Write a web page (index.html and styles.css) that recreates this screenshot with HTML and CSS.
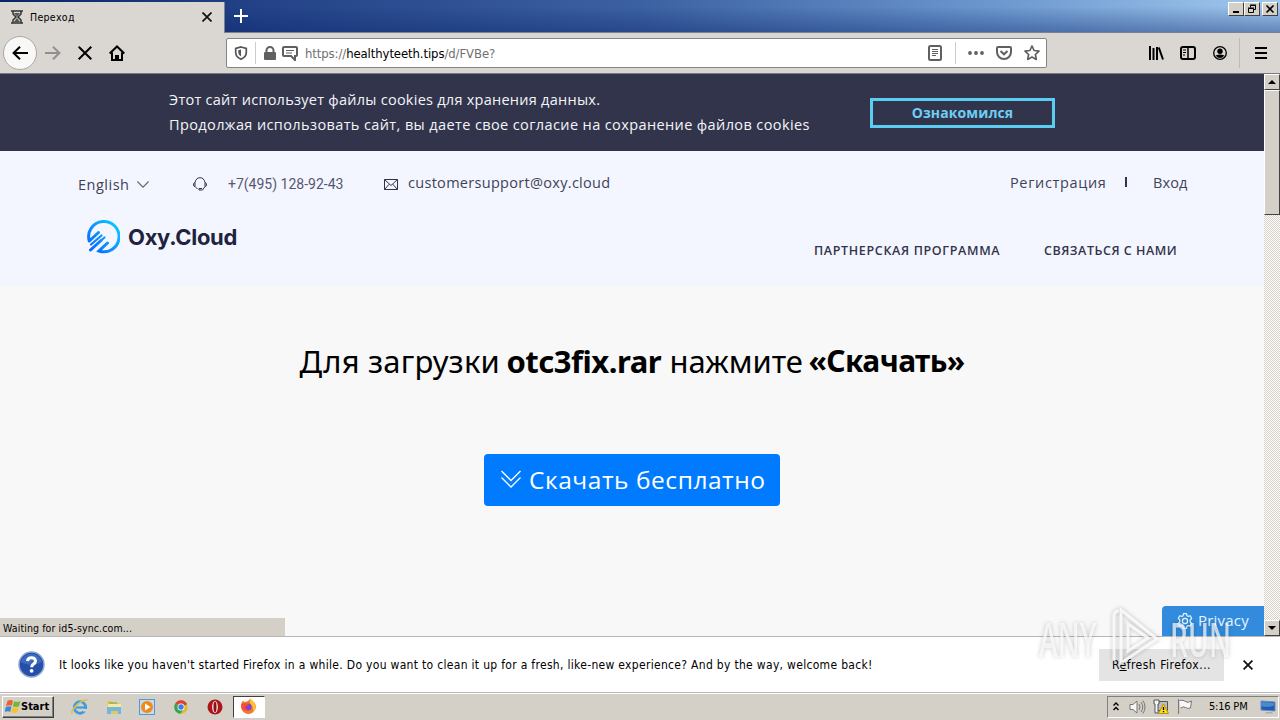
FILE: index.html
```html
<!DOCTYPE html>
<html lang="ru">

<head>
    <meta charset="UTF-8">
    <meta name="viewport" content="width=device-width, initial-scale=1.0">
    <title>Переход</title>
    <link rel="stylesheet" href="styles.css">
</head>

<body>

    <!-- Tab strip -->
    <div class="titlebar">
        <div class="tab">
            <svg class="tab-icon" width="12" height="14" viewBox="0 0 12 14" fill="none" stroke="#333" stroke-width="1.500"><path d="M0 1h12M0 13h12M2 1v3l3 3-3 3v3M10 1v3L7 7l3 3v3"/><path d="M3 3h6L6 6.500zM2.500 12.500L6 8l3.500 4.500z" fill="#555" stroke="none"/></svg>
            <span class="tab-title">Переход</span>
            <svg class="tab-close" width="10" height="10" viewBox="0 0 10 10" stroke="#111" stroke-width="1.700"><path d="M.500.500l9 9M9.500.500l-9 9"/></svg>
        </div>
        <svg class="new-tab" width="14" height="14" viewBox="0 0 14 14" stroke="#fff" stroke-width="2"><path d="M7 0v14M0 7h14"/></svg>
        <div class="window-buttons">
            <button><svg width="12" height="10" viewBox="0 0 12 10"><path d="M3 7h6v2H3z"/></svg></button>
            <button><svg width="12" height="10" viewBox="0 0 12 10" fill="none" stroke="#000"><path d="M4.500 3.500V1.500h5v4h-2M2.500 4.500h5v4h-5zM4 1h6M2 4h6"/></svg></button>
            <button class="close"><svg width="12" height="10" viewBox="0 0 12 10" stroke="#000" stroke-width="1.600"><path d="M2.500 1.500l7 7M9.500 1.500l-7 7"/></svg></button>
        </div>
    </div>

    <!-- Navigation bar -->
    <div class="navbar">
        <div class="back"><svg width="16" height="14" viewBox="0 0 16 14" fill="none" stroke="#000" stroke-width="2"><path d="M16 7H1.500M8 .8L1.600 7 8 13.200"/></svg></div>
        <svg class="forward" width="16" height="14" viewBox="0 0 16 14" fill="none" stroke="#909090" stroke-width="2"><path d="M0 7h14.500M8 .8L14.400 7 8 13.200"/></svg>
        <svg class="stop" width="14" height="14" viewBox="0 0 14 14" stroke="#000" stroke-width="2"><path d="M.7.7l12.600 12.600M13.300.7L.7 13.300"/></svg>
        <svg class="home" width="16" height="16" viewBox="0 0 16 16" fill="none" stroke="#000" stroke-width="2"><path d="M.7 8.500L8 1.500l7.300 7M3 7.500V15h10V7.500"/><path d="M6 15v-5h4v5z" fill="#000" stroke="none"/></svg>
        <div class="urlbar">
            <svg class="shield" width="14" height="14" viewBox="0 0 14 14" fill="none" stroke="#555" stroke-width="1.700"><path d="M7 1l5.300 1.500v3.700c0 3.400-2 5.600-5.300 7-3.300-1.400-5.300-3.600-5.300-7V2.500z"/><path d="M7 3.500v7C5 9.300 4.300 8 4.300 6V4.300z" fill="#555" stroke="none"/></svg>
            <i class="url-sep"></i>
            <svg class="lock" width="12" height="14" viewBox="0 0 12 14"><path d="M2.500 7V4.500a3.500 3.500 0 0 1 7 0V7" fill="none" stroke="#606060" stroke-width="2"/><rect y="6" width="12" height="8" rx="1" fill="#606060"/></svg>
            <svg class="chat" width="16" height="15" viewBox="0 0 16 15" fill="none" stroke="#606060"><path d="M2 1h12q1 0 1 1v7q0 1-1 1h-1v4l-4-4H2q-1 0-1-1V2q0-1 1-1z" stroke-width="2"/><path d="M4 4.500h8M4 7h6" stroke-width="1.200"/></svg>
            <span class="url">https://<b>healthyteeth.tips</b>/d/FVBe?</span>
            <svg class="reader" width="14" height="16" viewBox="0 0 14 16" fill="none" stroke="#606060"><rect x="1" y="1" width="12" height="14" rx="1.500" stroke-width="2"/><path d="M4 4.500h6M4 6.500h6M4 8.500h6M4 10.500h4"/></svg>
            <i class="url-sep"></i>
            <svg class="dots" width="16" height="4" viewBox="0 0 16 4" fill="#606060"><circle cx="2" cy="2" r="1.900"/><circle cx="8" cy="2" r="1.900"/><circle cx="14" cy="2" r="1.900"/></svg>
            <svg class="pocket" width="16" height="14" viewBox="0 0 16 14" fill="none" stroke="#606060" stroke-width="2"><path d="M2 1h12q1 0 1 1v4a7 7 0 0 1-14 0V2q0-1 1-1z"/><path d="M4.500 5L8 8.300 11.500 5"/></svg>
            <svg class="star" width="16" height="16" viewBox="0 0 16 16" fill="none" stroke="#606060" stroke-width="1.700" stroke-linejoin="round"><path d="M8 1l2.100 4.500 4.900.6-3.600 3.400.9 4.900L8 12l-4.300 2.400.9-4.900L1 6.100l4.900-.6z"/></svg>
        </div>
        <div class="tools">
            <svg width="16" height="14" viewBox="0 0 16 14" fill="none" stroke="#000" stroke-width="2"><path d="M2 0v14M5.500 2v12M9 1v13M10.800 1.500l4.200 12"/></svg>
            <svg width="16" height="14" viewBox="0 0 16 14" fill="none" stroke="#000" stroke-width="2"><rect x="1" y="1" width="14" height="12" rx="2"/><path d="M8 1v12" stroke-width="1.500"/><path d="M3 4h3M3 6.500h3M3 9h2" stroke-width="1"/></svg>
            <svg width="14" height="14" viewBox="0 0 14 14"><circle cx="7" cy="7" r="6.300" fill="none" stroke="#000" stroke-width="1.300"/><circle cx="7" cy="5.300" r="2.700"/><path d="M2.600 9.500Q7 7.500 11.400 9.500 9.500 12 7 12T2.600 9.500z"/></svg>
        </div>
        <div class="menu"><svg width="12" height="12" viewBox="0 0 12 12" stroke="#000" stroke-width="2"><path d="M0 1h12M0 6h12M0 11h12"/></svg></div>
    </div>

    <!-- Web page -->
    <div class="viewport">
        <div class="page">
            <div class="cookies">
                <p><span class="cookie-first">Этот сайт использует файлы cookies для хранения данных.</span><br><span class="cookie-second">Продолжая использовать сайт, вы даете свое согласие на сохранение файлов cookies</span></p>
                <button><span>Ознакомился</span></button>
            </div>
            <header class="site-header">
                <div class="topline">
                    <span class="lang">English</span>
                    <svg class="chevron" width="12" height="7" viewBox="0 0 12 7" fill="none" stroke="#66687a" stroke-width="1.200"><path d="M.4.500L6 6.200 11.600.500"/></svg>
                    <svg class="headset" width="14" height="14" viewBox="0 0 14 14" fill="none" stroke="#30324c"><path d="M4.500 12L2 9.500V5.500Q3 .700 7 .700t5 4.800v4L9.500 13H6v-1.500h3M2 5.500L.600 6.500v2.300L2 9.500M12 5.500l1.400 1v2.300L12 9.500"/></svg>
                    <span class="phone">+7(495) 128-92-43</span>
                    <svg class="mail" width="14" height="11" viewBox="0 0 14 11" fill="none" stroke="#30324c"><path d="M.500.500h13v10H.500zM.500.500L7 6.500l6.500-6M.500 10.500l4.700-5.300M13.500 10.500L8.800 5.200"/></svg>
                    <span class="email">customersupport@oxy.cloud</span>
                    <span class="register">Регистрация</span>
                    <i class="divider"></i>
                    <span class="login">Вход</span>
                </div>
                <div class="mainline">
                    <div class="logo">
                        <svg width="34" height="35" viewBox="0 0 34 35" fill="none" stroke="url(#oxy)" stroke-width="3" stroke-linecap="round">
                            <defs><linearGradient id="oxy" gradientUnits="userSpaceOnUse" x1="3" y1="30" x2="31" y2="4"><stop offset="0" stop-color="#0a65ff"/><stop offset="1" stop-color="#0cc9ff"/></linearGradient></defs>
                            <path d="M3.300 22A15.200 15.200 0 1 1 13 32L21.500 24M3.300 22L12.500 13.500M4.500 31L15 21.500"/>
                            <path d="M5 25.500L15.500 16.500M15.500 21L18.500 18.500" stroke-width="2.200"/>
                        </svg>
                        <span>Oxy.Cloud</span>
                    </div>
                    <nav>
                        <a class="partner">ПАРТНЕРСКАЯ ПРОГРАММА</a>
                        <a class="contact">СВЯЗАТЬСЯ С НАМИ</a>
                    </nav>
                </div>
            </header>
            <main>
                <h1><span class="h-a">Для загрузки</span> <b class="h-b">otc3fix.rar</b> <span class="h-c">нажмите</span> <b class="h-d">«Скачать»</b></h1>
                <button class="download">
                    <svg width="20" height="18" viewBox="0 0 20 18" fill="none" stroke="#fff" stroke-width="1.300"><path d="M.500 1L10 10.500 19.500 1M.500 7.500L10 17l9.500-9.500"/></svg>
                    <span>Скачать бесплатно</span>
                </button>
            </main>
            <div class="privacy">
                <svg width="16" height="16" viewBox="0 0 16 16" fill="none" stroke="#e8f4ff" stroke-width="1.200" stroke-linejoin="round"><path d="M6.500.700h3l.4 2 1.300.700 2-.700 1.500 2.600L13.200 7v2l1.500 1.500-1.500 2.600-2-.6-1.300.8-.4 2h-3l-.4-2-1.300-.8-2 .6-1.500-2.600L2.800 9V7L1.300 5.300l1.500-2.600 2 .7L6.100 2.700z"/><circle cx="8" cy="8" r="2.600"/></svg>
                <span>Privacy</span>
            </div>
            <div class="status">Waiting for id5-sync.com...</div>
        </div>
        <div class="scrollbar">
            <div class="arrow"><svg width="8" height="4" viewBox="0 0 8 4"><path d="M4 0l4 4H0z"/></svg></div>
            <div class="thumb"></div>
            <div class="arrow down"><svg width="8" height="4" viewBox="0 0 8 4"><path d="M0 0h8L4 4z"/></svg></div>
        </div>
    </div>

    <!-- Firefox notification -->
    <div class="notice">
        <svg class="question" width="27" height="27" viewBox="0 0 27 27"><circle cx="13.500" cy="13.500" r="12.500" fill="#2450a8" stroke="#8fa5d6" stroke-width="1.500"/><path d="M3 11a10.800 10.800 0 0 1 21 0Q13 17 3 11z" fill="#3d69be"/><path d="M9.500 10.200Q9.700 6.700 13.500 6.700t4 3.300q0 2-2.200 3.200-1.600 1-1.600 3" fill="none" stroke="#fff" stroke-width="3"/><circle cx="13.600" cy="19.800" r="1.900" fill="#fff"/></svg>
        <span class="notice-text">It looks like you haven't started Firefox in a while. Do you want to clean it up for a fresh, like-new experience? And by the way, welcome back!</span>
        <button><span>R<u>e</u>fresh Firefox...</span></button>
        <svg class="notice-close" width="10" height="10" viewBox="0 0 10 10" stroke="#111" stroke-width="1.800"><path d="M.600.600l8.800 8.800M9.400.600L.600 9.400"/></svg>
    </div>

    <!-- Taskbar -->
    <div class="taskbar">
        <div class="start">
            <svg width="16" height="15" viewBox="0 0 16 15"><path d="M2.500 2Q5 .300 8 1.700L6.800 6.700Q4 5.500 1 7z" fill="#e9622b"/><path d="M9 2.200q3 1.300 6.500 0l-1.400 5Q11 8.700 7.800 7.200z" fill="#7ab43c"/><path d="M.800 8Q4 6.500 6.500 7.800L5.200 12.700Q2.500 11.500-.400 13z" fill="#3f86d2"/><path d="M7.500 8.300q3 1.400 6.300 0l-1.400 5q-3 1.300-6.200 0z" fill="#f5c330"/></svg>
            <span>Start</span>
        </div>
        <div class="launchers">
            <svg width="18" height="18" viewBox="0 0 18 18" fill="none"><circle cx="9" cy="9.500" r="5.800" stroke="#3b9fdd" stroke-width="2.800"/><path d="M5 9.500h9" stroke="#3b9fdd" stroke-width="2.200"/><path d="M11 11h6v2.500h-5z" fill="#d6d3cc"/><path d="M1 16C-.500 12 10 1 16.500 2" stroke="#e5bd45" stroke-width="1.500"/></svg>
            <svg width="18" height="18" viewBox="0 0 18 18"><path d="M2 3h5l1 2h7v11H2z" fill="#e8c75e"/><path d="M3 6h13v5H3z" fill="#f8e8a4"/><path d="M2 9h14v7h-3v-3H6v3H2z" fill="#71b8dd"/><path d="M4 5h8" stroke="#62ac4b"/></svg>
            <svg width="18" height="18" viewBox="0 0 18 18"><rect x="1.500" y="1.500" width="15" height="15" fill="#c5dcec" stroke="#519ad1"/><circle cx="9" cy="9" r="6" fill="#f08a1c"/><path d="M7 5.500l5.500 3.500L7 12.500z" fill="#fff"/></svg>
            <svg width="18" height="18" viewBox="0 0 18 18"><circle cx="9" cy="9" r="6.700" fill="#e1ba32"/><path d="M9 9L3.200 5.600A6.700 6.700 0 0 1 15.200 6.300z" fill="#d94435"/><path d="M9 9L3.200 5.600A6.700 6.700 0 0 0 8.500 15.700l3-5z" fill="#37a353"/><circle cx="9" cy="9" r="3.500" fill="#fff"/><circle cx="9" cy="9" r="2.700" fill="#397fe0"/></svg>
            <svg width="18" height="18" viewBox="0 0 18 18"><circle cx="9" cy="9" r="7.500" fill="#ad1519"/><ellipse cx="9" cy="9" rx="2.900" ry="6" fill="#f1e4e0"/><ellipse cx="9" cy="9" rx="1.500" ry="5.300" fill="#8b1115"/></svg>
        </div>
        <div class="active-app">
            <svg width="17" height="17" viewBox="0 0 17 17"><path d="M1.500 5L3 2.500 4 4l3-.500Q10 2 10 .500 12 2 12.500 4L14 4q2.500 3 1.700 6a7.400 7.400 0 0 1-14.600-.500Q.800 7 1.500 5z" fill="#f7772b"/><path d="M10 .500q4 2 5.500 6.500Q16 11 13 14q1-5-3-9z" fill="#ffc52e"/><circle cx="8" cy="9" r="3.500" fill="#7846ce"/><path d="M1.500 6Q6 4 9 7.500L5.500 8q-.500 3 3 4.200Q4 14 1.500 10z" fill="#fb493c"/></svg>
        </div>
        <div class="tray">
            <svg class="t-up" width="6" height="9" viewBox="0 0 6 9" fill="none" stroke="#000" stroke-width="1.400"><path d="M.500 3.500L3 1l2.500 2.500M.500 8L3 5.500 5.500 8"/></svg>
            <svg class="t-sound" width="17" height="14" viewBox="0 0 17 14" fill="none" stroke="#777"><path d="M1 4.500h3L8 1v12L4 9.500H1z" fill="#f8f8f8"/><path d="M10 4q2 3 0 6M12 2q3.500 5 0 10M14 .500q4 6.500 0 13"/></svg>
            <svg class="t-net" width="16" height="15" viewBox="0 0 16 15"><path d="M4.500 2.500h10v9h-10z" fill="#bcbcc0" stroke="#555"/><path d="M1 1h5v4H5v9H2V5H1z" fill="#f6f6f6" stroke="#555"/><path d="M10.500 5l5 9.500h-10z" fill="#ffdc24" stroke="#bc9600"/><path d="M10.500 8v3M10.500 12v1.300" stroke="#000" stroke-width="1.300"/></svg>
            <svg class="t-flag" width="16" height="15" viewBox="0 0 16 15"><path d="M2.500 1.500q4-1 6 1t6-.500l-1 7q-3 1-5-.500t-5 .500M1.500 0v15" fill="#f7f7f7" stroke="#777"/></svg>
            <span class="clock">5:16 PM</span>
            <svg class="t-desktop" width="16" height="14" viewBox="0 0 16 14"><path d="M1 1l14 1v9L1 10z" fill="#225bb2" stroke="#668cc0"/><path d="M1 2l13 .600v3Q7 8 1 6z" fill="#498bd2"/><path d="M6 12h6l1 1.500H5z" fill="#aaa"/></svg>
        </div>
    </div>

    <!-- Watermark -->
    <div class="watermark">
        <span class="any">ANY</span>
        <svg width="58" height="62" viewBox="0 0 58 62" fill="none" stroke="#fff" stroke-opacity=".8" stroke-width="3"><path d="M11 8v46M11 8q1-4 5-4M18 3l36 29-36 24zM25 17v27l20-13z"/></svg>
        <span class="run">RUN</span>
    </div>

</body>

</html>
```
FILE: styles.css
```css
* {
    margin: 0;
    padding: 0;
    box-sizing: border-box;
}

body {
    width: 1280px;
    height: 720px;
    overflow: hidden;
    display: flex;
    flex-direction: column;
    position: relative;
    background: #d4d0c8;
    font-family: "DejaVu Sans Condensed", "DejaVu Sans", sans-serif;
    font-size: 11px;
    color: #000;
}

svg {
    display: block;
    flex: none;
}

span,
a {
    white-space: nowrap;
}

button {
    border: none;
    font: inherit;
}

/* Tab strip */
.titlebar {
    height: 33px;
    flex: none;
    display: flex;
    align-items: flex-start;
    border-bottom: 1px solid #7b8290;
    background: linear-gradient(to bottom, rgba(10, 36, 106, 0) 20%, rgba(10, 36, 106, 0.4)), linear-gradient(to right, #0a246a 0, #234287 20%, #3c61a2 50%, #6c98cf 78%, #a1c8ee 100%);
}

.tab {
    width: 225px;
    height: 32px;
    margin-top: 2px;
    padding: 0 12px 2px 11px;
    display: flex;
    align-items: center;
    background: #dad7d2;
    border-right: 1px solid #7b8290;
}

.tab-title {
    margin-left: 7px;
    font-size: 10.5px;
    letter-spacing: 0.3px;
}

.tab-close {
    margin-left: auto;
}

.new-tab {
    margin: 9px 0 0 9px;
}

.window-buttons {
    margin: 2px 2px 0 auto;
    display: flex;
}

.window-buttons button {
    width: 16px;
    height: 14px;
    padding: 1px;
    background: #d4d0c8;
    border: 1px solid;
    border-color: #fff #404040 #404040 #fff;
}

.window-buttons .close {
    margin-left: 2px;
}

/* Navigation bar */
.navbar {
    height: 41px;
    flex: none;
    display: flex;
    align-items: center;
    background: #dad7d2;
    border-bottom: 1px solid #777983;
}

.back {
    width: 34px;
    height: 34px;
    margin-left: 3px;
    display: flex;
    align-items: center;
    justify-content: center;
    background: #f8f8f7;
    border: 1px solid #aaa8a5;
    border-radius: 50%;
}

.forward {
    margin-left: 8px;
}

.stop {
    margin-left: 17px;
}

.home {
    margin-left: 17px;
}

.urlbar {
    width: 821px;
    height: 30px;
    margin-left: 101px;
    padding: 0 6px 0 7px;
    display: flex;
    align-items: center;
    background: #fff;
    border: 1px solid #858585;
    border-radius: 2px;
}

.url-sep {
    width: 1px;
    height: 22px;
    background: #ccc;
}

.shield {
    margin-right: 7px;
}

.lock {
    margin-left: 8px;
}

.chat {
    margin-left: 6px;
}

.url {
    margin-left: 7px;
    font-size: 13px;
    color: #707070;
    letter-spacing: -0.1px;
}

.url b {
    font-weight: normal;
    color: #000;
}

.reader {
    margin-left: auto;
    margin-right: 13px;
}

.dots {
    margin-left: 12px;
}

.pocket {
    margin-left: 12px;
}

.star {
    margin-left: 12px;
}

.tools {
    margin-left: 101px;
    display: flex;
    align-items: center;
    gap: 16px;
}

.tools svg:last-child {
    margin-left: 1px;
}

.menu {
    height: 30px;
    margin-left: 12px;
    padding-left: 15px;
    display: flex;
    align-items: center;
    border-left: 1px solid #bfbcb7;
}

/* Web page */
.viewport {
    height: 562px;
    flex: none;
    display: flex;
}

.page {
    width: 1264px;
    position: relative;
    background: #f8f8f8;
    font-family: "Open Sans", "Noto Sans", sans-serif;
}

.cookies {
    height: 77px;
    padding: 13px 0 0 169px;
    display: flex;
    align-items: flex-start;
    background: #32344c;
    color: #f4f4f8;
    font-size: 14.5px;
    line-height: 25px;
}

.cookies p {
    width: 701px;
}

.cookie-first {
    letter-spacing: 0.26px;
}

.cookie-second {
    letter-spacing: 0.39px;
}

.cookies button {
    width: 185px;
    height: 30px;
    margin-top: 11px;
    background: none;
    border: 3px solid #5bcdf0;
    color: #6dcff2;
    font-size: 14px;
    font-weight: bold;
    line-height: 24px;
    letter-spacing: 0.1px;
}

.site-header {
    height: 135px;
    background: #f4f6ff;
    color: #32344c;
}

.topline {
    height: 66px;
    padding-left: 78px;
    display: flex;
    align-items: center;
    font-size: 14.5px;
    color: #404259;
}

.lang {
    width: 52px;
    letter-spacing: 0.5px;
}

.chevron {
    margin-left: 7px;
}

.headset {
    margin-left: 44px;
}

.phone {
    width: 116px;
    margin-left: 21px;
    font-family: Roboto, sans-serif;
    font-size: 14px;
    color: #565870;
}

.mail {
    margin-left: 40px;
}

.email {
    width: 203px;
    margin-left: 10px;
    margin-top: -4px;
    letter-spacing: 0.3px;
}

.register {
    width: 97px;
    margin-left: 399px;
    margin-top: -4px;
    letter-spacing: 0.65px;
}

.divider {
    width: 2px;
    height: 10px;
    margin-left: 18px;
    margin-top: -4px;
    background: #32344c;
}

.login {
    margin-left: 26px;
    margin-top: -4px;
    letter-spacing: 0.1px;
}

.mainline {
    display: flex;
    justify-content: space-between;
    align-items: flex-start;
    padding: 2px 87px 0 86px;
}

.logo {
    display: flex;
    align-items: center;
    color: #1d2340;
    font-family: "Inter", sans-serif;
    font-size: 22px;
    font-weight: 700;
}

.logo span {
    margin-left: 8px;
    letter-spacing: -0.3px;
}

nav {
    padding-top: 23px;
    display: flex;
    font-family: "Open Sans", sans-serif;
    font-size: 12.5px;
    font-weight: 600;
}

.partner {
    width: 230px;
    letter-spacing: 0.65px;
}

.contact {
    width: 133px;
    letter-spacing: 0.53px;
}

main {
    display: flex;
    flex-direction: column;
    align-items: center;
    padding-top: 52px;
}

h1 {
    width: 665px;
    height: 46px;
    display: flex;
    font-size: 31px;
    font-weight: normal;
    line-height: 46px;
    font-family: "Noto Sans", sans-serif;
}

.h-a {
    width: 207px;
    flex: none;
    letter-spacing: 0.2px;
}

.h-b {
    width: 163px;
    flex: none;
    letter-spacing: -0.5px;
}

.h-c {
    width: 139px;
    flex: none;
}

.h-d {
    font-size: 30px;
    letter-spacing: -0.6px;
}

.download {
    width: 296px;
    height: 52px;
    margin-top: 70px;
    padding-left: 17px;
    display: flex;
    align-items: center;
    background: #007bff;
    border-radius: 4px;
    color: #fff;
    font-family: "Open Sans", sans-serif;
    font-size: 24.5px;
}

.download svg {
    margin-top: -3px;
}

.download span {
    margin-left: 8px;
    margin-top: -2px;
    letter-spacing: 0.55px;
}

.privacy {
    position: absolute;
    right: 0;
    bottom: 0;
    width: 102px;
    height: 30px;
    padding-left: 15px;
    display: flex;
    align-items: center;
    gap: 5px;
    background: #328bdc;
    border-radius: 4px 0 0 0;
    color: #e8f4ff;
    font-size: 15px;
}

.privacy span {
    margin-top: -2px;
    letter-spacing: 0.2px;
}

.status {
    position: absolute;
    left: 0;
    bottom: 0;
    width: 285px;
    height: 18px;
    padding-left: 3px;
    background: #d4d0c8;
    font-family: "DejaVu Sans Condensed", sans-serif;
    font-size: 10.5px;
    line-height: 20px;
    letter-spacing: 0.1px;
}

.scrollbar {
    width: 16px;
    display: flex;
    flex-direction: column;
    background: repeating-conic-gradient(#fff 0 25%, #d4d0c8 0 50%) 0 0 / 2px 2px;
}

.arrow,
.thumb {
    background: #d4d0c8;
    border: 1px solid;
    border-color: #fff #404040 #404040 #fff;
}

.arrow {
    height: 16px;
    display: flex;
    align-items: center;
    justify-content: center;
}

.thumb {
    height: 125px;
}

.down {
    margin-top: auto;
}

/* Notification */
.notice {
    height: 57px;
    flex: none;
    padding-left: 18px;
    display: flex;
    align-items: center;
    background: #fff;
    border-top: 1px solid #b7b7b7;
    border-bottom: 1px solid #b7b7b7;
    font-size: 12px;
}

.notice-text {
    width: 815px;
    margin-left: 14px;
    letter-spacing: 0.31px;
}

.notice button {
    width: 125px;
    height: 32px;
    margin-left: 225px;
    background: #e4e4e4;
    color: #000;
    letter-spacing: 0.5px;
}

.notice-close {
    margin-left: 19px;
}

/* Taskbar */
.taskbar {
    flex: 1;
    padding: 1px 1px 2px 2px;
    display: flex;
    align-items: center;
    background: #d4d0c8;
    border-top: 1px solid #fff;
}

.start {
    width: 52px;
    height: 22px;
    padding-left: 2px;
    display: flex;
    align-items: center;
    border: 1px solid;
    border-color: #fff #404040 #404040 #fff;
    box-shadow: inset -1px -1px #808080;
    font-size: 11px;
    font-weight: bold;
}

.launchers {
    margin-left: 17px;
    display: flex;
    gap: 15.7px;
}

.active-app {
    width: 32px;
    height: 22px;
    margin-left: 9px;
    display: flex;
    align-items: center;
    justify-content: center;
    background: #fff;
    border: 1px solid;
    border-color: #404040 #fff #fff #404040;
}

.tray {
    width: 172px;
    height: 22px;
    margin-left: auto;
    padding-left: 5px;
    display: flex;
    align-items: center;
    border: 1px solid;
    border-color: #808080 #fff #fff #808080;
}

.t-sound {
    margin-left: 10px;
}

.t-net {
    margin-left: 7px;
}

.t-flag {
    margin-left: 8px;
}

.clock {
    width: 40px;
    margin-left: 16px;
    font-size: 11px;
    letter-spacing: -0.2px;
}

.t-desktop {
    margin-left: 11px;
}

/* Watermark over the page and the notification */
.watermark {
    position: absolute;
    left: 1039px;
    top: 606px;
    display: flex;
    align-items: center;
    font-family: "Open Sans", sans-serif;
    font-size: 47px;
    font-weight: 600;
    line-height: 62px;
    color: rgba(255, 255, 255, 0.7);
    filter: drop-shadow(0 0 2px rgba(0, 0, 0, 0.3));
}

.watermark span {
    width: 61px;
    padding-top: 2px;
    transform: scaleX(0.6);
    transform-origin: left;
}

.watermark svg {
    margin: 0 9px 0 3px;
}
```
